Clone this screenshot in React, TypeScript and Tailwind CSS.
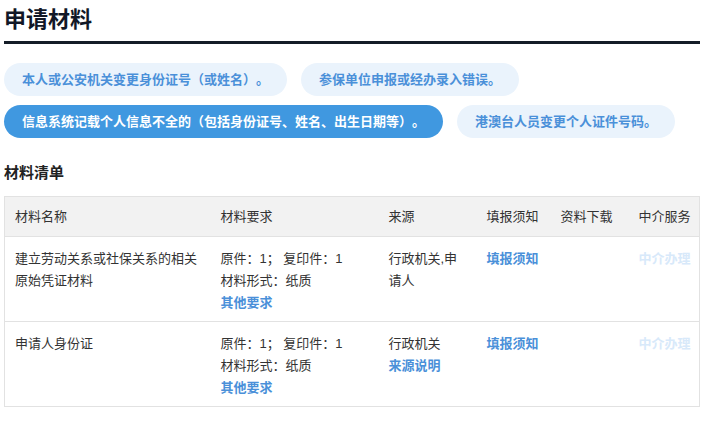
import React from "react";

const font = { fontFamily: '"Liberation Sans", "Noto Sans CJK SC", sans-serif' };

const pills = [
  { t: "本人或公安机关变更身份证号（或姓名）。", active: false },
  { t: "参保单位申报或经办录入错误。", active: false },
  { t: "信息系统记载个人信息不全的（包括身份证号、姓名、出生日期等）。", active: true },
  { t: "港澳台人员变更个人证件号码。", active: false },
];

export default function App() {
  return (
    <div className="bg-white w-[716px] h-[425px] overflow-hidden [text-spacing-trim:space-all]" style={font}>
      <div className="ml-[4px] w-[696px]">
        <h2 className="text-[22px] font-bold leading-[30px] pt-[5px] pb-[6px] border-b-[3px] border-[#141d28] text-[#111827]">
          申请材料
        </h2>
        <div className="mt-[19px] flex flex-wrap gap-x-[14px] gap-y-[9px]">
          {pills.map((p) => (
            <div
              key={p.t}
              className={
                "h-[33px] px-[18px] rounded-full flex items-center text-[13px] font-bold whitespace-nowrap " +
                (p.active ? "bg-[#4098e0] text-white" : "bg-[#eaf3fc] text-[#4a90d9]")
              }
            >
              {p.t}
            </div>
          ))}
        </div>
        <h3 className="mt-[24px] text-[15px] font-bold leading-[22px] text-[#222]">材料清单</h3>
        <table className="mt-[12px] w-[695px] table-fixed border border-[#e2e2e2] border-collapse text-[13px] text-[#333]">
          <colgroup>
            <col className="w-[206px]" />
            <col className="w-[168px]" />
            <col className="w-[98px]" />
            <col className="w-[74px]" />
            <col className="w-[78px]" />
            <col className="w-[71px]" />
          </colgroup>
          <thead>
            <tr className="bg-[#f2f2f2] h-[40px] border-b border-[#e2e2e2]">
              <th className="font-normal text-left pl-[10px]">材料名称</th>
              <th className="font-normal text-left pl-[10px]">材料要求</th>
              <th className="font-normal text-left pl-[10px]">来源</th>
              <th className="font-normal text-left pl-[10px]">填报须知</th>
              <th className="font-normal text-left pl-[10px]">资料下载</th>
              <th className="font-normal text-left pl-[10px]">中介服务</th>
            </tr>
          </thead>
          <tbody className="leading-[22px]">
            <tr className="h-[85px] border-b border-[#e2e2e2] align-top">
              <td className="px-[10px] pt-[11px]">建立劳动关系或社保关系的相关原始凭证材料</td>
              <td className="px-[10px] pt-[11px]">
                <div>原件：1； 复印件：1</div>
                <div>材料形式：纸质</div>
                <div className="font-bold text-[#4a90d9]">其他要求</div>
              </td>
              <td className="px-[10px] pt-[11px]">行政机关,申请人</td>
              <td className="px-[10px] pt-[11px] font-bold text-[#4a90d9]">填报须知</td>
              <td className="px-[10px] pt-[11px]"></td>
              <td className="pl-[10px] pr-0 pt-[11px] font-bold text-[#d8e9fa] whitespace-nowrap">中介办理</td>
            </tr>
            <tr className="h-[85px] border-b border-[#e2e2e2] align-top">
              <td className="px-[10px] pt-[11px]">申请人身份证</td>
              <td className="px-[10px] pt-[11px]">
                <div>原件：1； 复印件：1</div>
                <div>材料形式：纸质</div>
                <div className="font-bold text-[#4a90d9]">其他要求</div>
              </td>
              <td className="px-[10px] pt-[11px]">
                <div>行政机关</div>
                <div className="font-bold text-[#4a90d9]">来源说明</div>
              </td>
              <td className="px-[10px] pt-[11px] font-bold text-[#4a90d9]">填报须知</td>
              <td className="px-[10px] pt-[11px]"></td>
              <td className="pl-[10px] pr-0 pt-[11px] font-bold text-[#d8e9fa] whitespace-nowrap">中介办理</td>
            </tr>
          </tbody>
        </table>
      </div>
    </div>
  );
}
